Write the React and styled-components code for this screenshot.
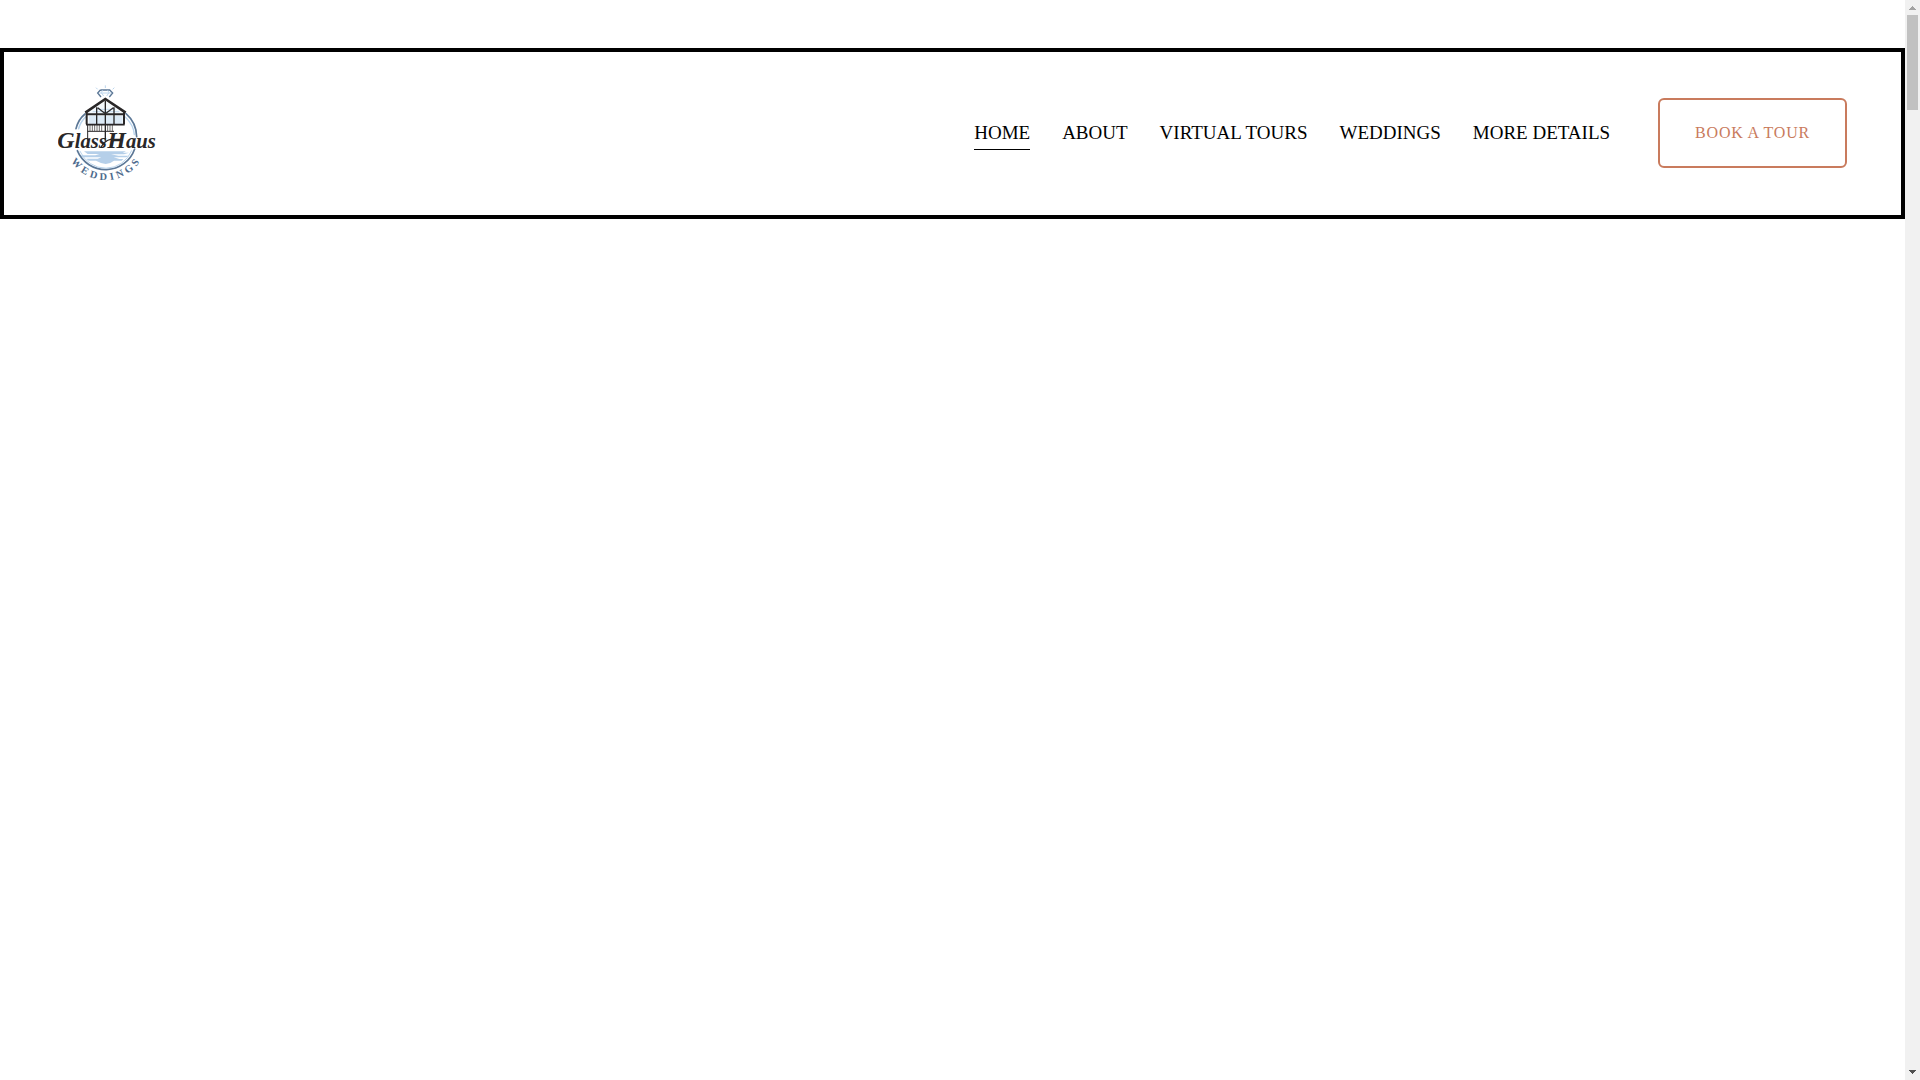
import React from "react";
import styled, { createGlobalStyle } from "styled-components";

const GlobalStyle = createGlobalStyle`
  body {
    margin: 0;
    background: #fff;
    color: #000;
    font-family: "Liberation Serif", serif;
    overflow: hidden;
  }
`;

const Page = styled.div`
  display: flex;
  height: 100vh;
`;

const Content = styled.main`
  flex: 1;
  min-width: 0;
  padding-top: 48px;
`;

const Header = styled.header`
  display: flex;
  align-items: center;
  justify-content: space-between;
  padding: 30px 54px 32px;
  border: 4px solid #000;
`;

const LogoLink = styled.a`
  display: block;
  height: 101px;
`;

const Actions = styled.div`
  display: flex;
  align-items: center;
  gap: 48px;
`;

const Nav = styled.nav`
  display: flex;
  gap: 32px;
`;

const NavLink = styled.a`
  border-top: 1px solid transparent;
  border-bottom: 1px solid ${({ $active }) => ($active ? "#000" : "transparent")};
  color: #000;
  font-size: 19px;
  line-height: 32px;
  text-decoration: none;
  white-space: nowrap;
`;

const TourButton = styled.button`
  padding: 24px 35px;
  border: 2px solid #c97b5d;
  border-radius: 6px;
  background: transparent;
  color: #c97b5d;
  font-family: inherit;
  font-size: 16px;
  line-height: 18px;
  letter-spacing: 0.05em;
  white-space: nowrap;
  cursor: pointer;
`;

const ScrollTrack = styled.div`
  display: flex;
  flex-direction: column;
  align-items: center;
  width: 15px;
  background: #f1f1f1;
`;

const ScrollThumb = styled.div`
  width: 11px;
  height: 95px;
  margin-bottom: auto;
  background: #c1c1c1;
`;

const links = ["HOME", "ABOUT", "VIRTUAL TOURS", "WEDDINGS", "MORE DETAILS"];

const Logo = () => (
  <svg width="99" height="101" viewBox="54 20 297 303" role="img" aria-label="Glass Haus Weddings">
    <defs>
      <path id="logo-arc" d="M73 190A124 124 0 0 0 321 190" />
    </defs>

    {/* ring */}
    <g fill="none" strokeLinecap="round">
      <path d="M108 160Q115 132 135 116" stroke="#5b7796" strokeWidth="5" />
      <path d="M116 160Q121 140 137 125" stroke="#b9d4ed" strokeWidth="5" />
      <path d="M258 115Q289 142 290 184" stroke="#5b7796" strokeWidth="5" />
      <path d="M255 124Q281 148 283 178" stroke="#b9d4ed" strokeWidth="4" />
      <path d="M112 226A92 92 0 0 0 284 221" stroke="#5b7796" strokeWidth="5" />
      <path d="M120 228A84 84 0 0 0 275 226" stroke="#b9d4ed" strokeWidth="3" />
    </g>

    {/* water */}
    <g fill="#b5cfe9">
      <path d="M132 228H258L248 232H267L252 237H213L235 241H266L259 246H221L238 251H250L245 256H222Q213 264 197 266Q180 263 168 256H146L139 250H173L184 246H128L123 240H166L178 236H143Z" />
    </g>

    {/* diamond */}
    <path d="M181 44H209L218 53L208 65M181 44L173 53L183 65" fill="none" stroke="#5b7796" strokeWidth="4" />
    <path d="M178 53H213M188 45L184 52L191 62M203 45L207 52L200 62M196 30V38M168 37L173 42M223 37L218 42" fill="none" stroke="#bcd6ee" strokeWidth="3" />

    {/* glass house */}
    <path d="M143 112L196 78L249 112V147H143Z" fill="#f4f9fd" />
    <path d="M147 125H247M147 131H247M147 137H247M147 143H247M158 109H238M169 102H226" stroke="#c3daef" strokeWidth="3" />
    <g fill="none" stroke="#292728">
      <path d="M136 112L196 71L257 112" strokeWidth="8" />
      <path d="M140 111V147M252 111V147M140 117H252" strokeWidth="6" />
      <path d="M196 76V196M170 96V147M222 96V147M173 97L196 115L220 97" strokeWidth="4" />
      <path d="M138 148H254" strokeWidth="5" />
      <path d="M143 148V196M143 168H222" strokeWidth="3" />
      <path d="M150 149V167M157 149V167M164 149V167M171 149V167M178 149V167M185 149V167M203 149V167M210 149V167M217 149V167" strokeWidth="2" />
    </g>

    {/* wordmark, with larger capitals */}
    <g fill="#292728" fontFamily="Liberation Serif, serif" fontSize="62" fontStyle="italic" fontWeight="bold">
      <text x="52" y="218">
        <tspan fontSize="72">G</tspan>lass
      </text>
      <text x="202" y="218">
        <tspan fontSize="72">H</tspan>aus
      </text>
    </g>
    <path d="M183 216Q194 195 212 192H246" fill="none" stroke="#292728" strokeWidth="4" />
    <text fill="#4d6b8d" fontFamily="Liberation Serif, serif" fontSize="31" fontWeight="bold" letterSpacing="10" textAnchor="middle">
      <textPath href="#logo-arc" startOffset="51%">
        WEDDINGS
      </textPath>
    </text>
  </svg>
);

const App = () => {
  return (
    <>
      <GlobalStyle />
      <Page>
        <Content>
          <Header>
            <LogoLink href="#home">
              <Logo />
            </LogoLink>
            <Actions>
              <Nav>
                {links.map((link, index) => (
                  <NavLink key={link} href="#" $active={index === 0}>
                    {link}
                  </NavLink>
                ))}
              </Nav>
              <TourButton type="button">BOOK A TOUR</TourButton>
            </Actions>
          </Header>
        </Content>
        <ScrollTrack aria-hidden="true">
          <svg width="15" height="15" shapeRendering="crispEdges">
            <path d="M7 6h1v1h1v1h1v1h1v1H4V9h1V8h1V7h1z" fill="#a3a3a3" />
          </svg>
          <ScrollThumb />
          <svg width="15" height="15" shapeRendering="crispEdges">
            <path d="M4 5h7v1h-1v1H9v1H8v1H7V8H6V7H5V6H4z" fill="#505050" />
          </svg>
        </ScrollTrack>
      </Page>
    </>
  );
};

export default App;
